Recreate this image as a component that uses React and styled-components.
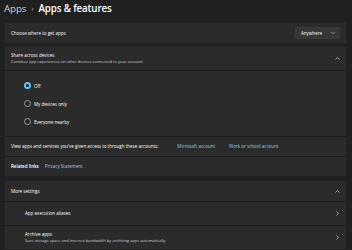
import React from 'react'
import styled, { createGlobalStyle } from 'styled-components'

const GlobalStyle = createGlobalStyle`
  html, body {
    margin: 0;
    padding: 0;
    background: #202020;
  }
  body {
    font-family: 'Open Sans', 'Noto Sans', 'Liberation Sans', sans-serif;
    color: #ffffff;
    width: 352px;
    height: 250px;
    overflow: hidden;
  }
`

const Page = styled.div`
  padding: 0 5px 0 4px;
  display: flex;
  flex-direction: column;
`

const Header = styled.div`
  height: 18px;
  margin-bottom: 4px;
  display: flex;
  align-items: center;
  gap: 2px;
  font-size: 9.8px;
  letter-spacing: -0.15px;
  font-weight: 600;
  line-height: 18px;
`

const Crumb = styled.span`
  color: ${p => (p.$current ? '#ffffff' : '#cfcfcf')};
  font-weight: ${p => (p.$current ? 600 : 500)};
`

const Sep = styled.span`
  color: #9a9a9a;
  font-size: 7px;
  margin: 0 3px;
`

const Card = styled.section`
  background: #2b2b2b;
  border: 1px solid #232323;
  border-radius: 2px;
  margin-bottom: ${p => p.$gap || 2}px;
  display: flex;
  flex-direction: column;
`

const Row = styled.div`
  height: ${p => p.$h}px;
  display: flex;
  align-items: center;
  padding: 0 6px 0 ${p => p.$indent ?? 6}px;
  border-top: ${p => (p.$divider ? '1px solid #1e1e1e' : '0')};
  gap: 6px;
`

const RowText = styled.div`
  flex: 1;
  display: flex;
  flex-direction: column;
  gap: 0.5px;
`

const Label = styled.span`
  font-size: 4.5px;
  line-height: 7px;
  color: #ffffff;
  font-weight: ${p => (p.$strong ? 600 : 400)};
`

const Sub = styled.span`
  font-size: 4px;
  line-height: 6px;
  color: #d2d2d2;
`

const Link = styled.span`
  font-size: 4.5px;
  line-height: 7px;
  color: #8fd3ec;
  margin-left: ${p => p.$ml || 0}px;
`

const Dropdown = styled.div`
  width: 45px;
  height: 12px;
  box-sizing: border-box;
  background: #373737;
  border: 1px solid #3a3a3a;
  border-radius: 2px;
  display: flex;
  align-items: center;
  justify-content: space-between;
  padding: 0 4px 0 5px;
  font-size: 4.5px;
  color: #ffffff;
`

const RadioList = styled.div`
  display: flex;
  flex-direction: column;
  padding: 0 0 0 13px;
`

const RadioItem = styled.label`
  height: 18px;
  display: flex;
  align-items: center;
  gap: 3px;
  font-size: 4.5px;
  color: #ffffff;
`

const RadioDot = styled.span`
  width: 7px;
  height: 7px;
  box-sizing: border-box;
  border-radius: 50%;
  border: ${p => (p.$checked ? '2px solid #5fc8f5' : '0.8px solid #9b9b9b')};
  background: ${p => (p.$checked ? '#1b1b1b' : '#272727')};
`

const Chevron = ({ dir = 'down', size = 5 }) => {
  const paths = {
    down: 'M1.5 3.5 L5 7 L8.5 3.5',
    up: 'M1.5 6.5 L5 3 L8.5 6.5',
    right: 'M3.5 1.5 L7 5 L3.5 8.5'
  }
  return (
    <svg width={size} height={size} viewBox="0 0 10 10" fill="none">
      <path d={paths[dir]} stroke="#cfcfcf" strokeWidth="1.4" strokeLinecap="round" strokeLinejoin="round" />
    </svg>
  )
}

const App = () => (
  <>
    <GlobalStyle />
    <Page>
      <Header>
        <Crumb>Apps</Crumb>
        <Sep>›</Sep>
        <Crumb $current>Apps &amp; features</Crumb>
      </Header>

      <Card>
        <Row $h={20}>
          <RowText>
            <Label>Choose where to get apps</Label>
          </RowText>
          <Dropdown>
            <span>Anywhere</span>
            <Chevron dir="down" size={4} />
          </Dropdown>
        </Row>
      </Card>

      <Card $gap={3}>
        <Row $h={23}>
          <RowText>
            <Label>Share across devices</Label>
            <Sub>Continue app experiences on other devices connected to your account</Sub>
          </RowText>
          <Chevron dir="up" />
        </Row>
        <Row $h={65} $divider $indent={6}>
          <RadioList>
            <RadioItem><RadioDot $checked />Off</RadioItem>
            <RadioItem><RadioDot />My devices only</RadioItem>
            <RadioItem><RadioDot />Everyone nearby</RadioItem>
          </RadioList>
        </Row>
        <Row $h={19} $divider>
          <Label>View apps and services you've given access to through these accounts:</Label>
          <Link $ml={13}>Microsoft account</Link>
          <Link $ml={8}>Work or school account</Link>
        </Row>
        <Row $h={19} $divider>
          <Label $strong>Related links</Label>
          <Link>Privacy Statement</Link>
        </Row>
      </Card>

      <Card>
        <Row $h={20}>
          <RowText>
            <Label>More settings</Label>
          </RowText>
          <Chevron dir="up" />
        </Row>
        <Row $h={23} $divider $indent={20}>
          <RowText>
            <Label>App execution aliases</Label>
          </RowText>
          <Chevron dir="right" />
        </Row>
        <Row $h={23} $divider $indent={20}>
          <RowText>
            <Label>Archive apps</Label>
            <Sub>Save storage space and internet bandwidth by archiving apps automatically</Sub>
          </RowText>
          <Chevron dir="right" />
        </Row>
      </Card>
    </Page>
  </>
)

export default App
